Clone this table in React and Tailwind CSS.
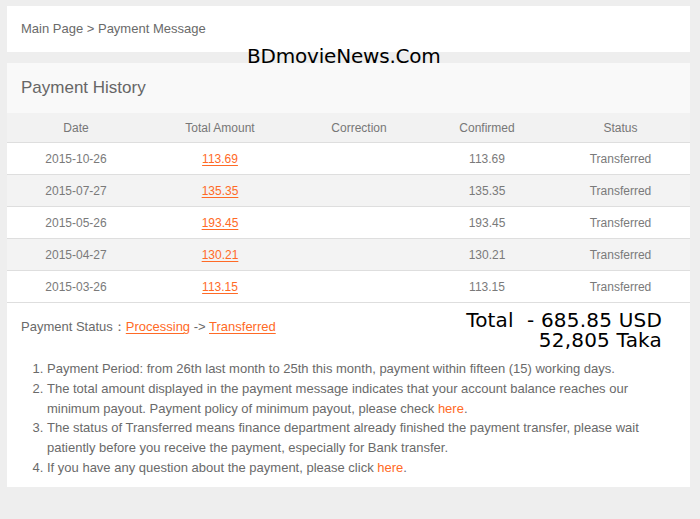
export default function App() {
  const rows = [
    ["2015-10-26", "113.69", "113.69"],
    ["2015-07-27", "135.35", "135.35"],
    ["2015-05-26", "193.45", "193.45"],
    ["2015-04-27", "130.21", "130.21"],
    ["2015-03-26", "113.15", "113.15"],
  ];
  const cols = ["w-[138px]", "w-[150px]", "w-[128px]", "w-[128px]", "w-[139px]"];
  return (
    <div className="relative w-[700px] h-[519px] bg-[#eeeeee] pt-[6px] pl-[7px] pr-[10px] text-[#707070]" style={{ fontFamily: '"Liberation Sans", Arial, sans-serif' }}>
      <div className="h-[46px] bg-white flex items-center pl-[14px] text-[13px] text-[#6a6a6a]">
        Main Page &gt; Payment Message
      </div>
      <div className="mt-[11px] h-[424px] bg-white">
        <div className="h-[50px] bg-[#f9f9f9] flex items-center pl-[14px] text-[17px] text-[#666]">Payment History</div>
        <div className="flex h-[30px] bg-[#f2f2f2] border-b border-[#dedede] text-[12px] text-[#777] items-center">
          {["Date", "Total Amount", "Correction", "Confirmed", "Status"].map((h, i) => (
            <div key={h} className={`${cols[i]} text-center`}>{h}</div>
          ))}
        </div>
        {rows.map((r, idx) => (
          <div key={idx} className={`flex h-[32px] border-b border-[#dedede] items-center text-[12px] text-[#7a7a7a] ${idx % 2 === 1 ? "bg-[#f3f3f3]" : "bg-white"}`}>
            <div className={`${cols[0]} text-center`}>{r[0]}</div>
            <div className={`${cols[1]} text-center`}><span className="text-[#ff6a26] underline underline-offset-2">{r[1]}</span></div>
            <div className={`${cols[2]} text-center`}></div>
            <div className={`${cols[3]} text-center`}>{r[2]}</div>
            <div className={`${cols[4]} text-center`}>Transferred</div>
          </div>
        ))}
        <div className="flex justify-between pl-[14px] pr-[28px] pt-[7px]">
          <div className="text-[13px] text-[#6a6a6a] pt-[7px]">
            Payment Status：<span className="text-[#ff6a26] underline underline-offset-2">Processing</span> -&gt; <span className="text-[#ff6a26] underline underline-offset-2">Transferred</span>
          </div>
          <div className="text-black text-[20px] leading-[20px] text-right tracking-[0.2px]" style={{ fontFamily: '"DejaVu Sans", Verdana, sans-serif' }}>
            <div className="whitespace-pre">Total  - 685.85 USD</div>
            <div>52,805 Taka</div>
          </div>
        </div>
        <ol className="list-decimal pl-[40px] pr-[20px] mt-[9px] text-[13px] leading-[19.8px] text-[#6a6a6a]">
          <li>Payment Period: from 26th last month to 25th this month, payment within fifteen (15) working days.</li>
          <li>The total amount displayed in the payment message indicates that your account balance reaches our minimum payout. Payment policy of minimum payout, please check <span className="text-[#ff6a26]">here</span>.</li>
          <li>The status of Transferred means finance department already finished the payment transfer, please wait patiently before you receive the payment, especially for Bank transfer.</li>
          <li>If you have any question about the payment, please click <span className="text-[#ff6a26]">here</span>.</li>
        </ol>
      </div>
      <div className="absolute left-[247px] top-[46px] text-[20px] text-black leading-none tracking-[-0.2px]" style={{ fontFamily: '"DejaVu Sans", Verdana, sans-serif' }}>
        BDmovieNews.Com
      </div>
    </div>
  );
}
